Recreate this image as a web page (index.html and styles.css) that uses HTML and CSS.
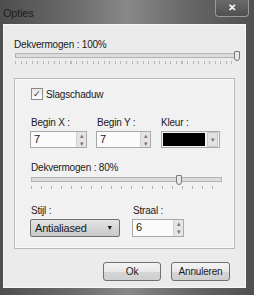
FILE: index.html
```html
<!DOCTYPE html>
<html lang="nl">
<head>
    <meta charset="UTF-8">
    <title>Opties</title>
    <link rel="stylesheet" href="styles.css">
</head>
<body>
<div class="window">
    <!-- Titelbalk -->
    <div class="titlebar">
        <span class="title">Opties</span>
        <div class="close">&#x2715;</div>
    </div>

    <div class="content">
        <div class="label top-label">Dekvermogen : 100%</div>
        <div class="slider wide">
            <div class="track"><div class="thumb" style="left: 218px;"></div></div>
            <div class="ticks"></div>
        </div>

        <!-- Slagschaduw groep -->
        <div class="group">
            <label class="check">
                <span class="box">&#x2713;</span>
                Slagschaduw
            </label>

            <div class="fields">
                <div class="field">
                    <div class="label">Begin X :</div>
                    <div class="spin w57"><span class="val">7</span><span class="arrows"><i>&#x25B4;</i><i>&#x25BE;</i></span></div>
                </div>
                <div class="field">
                    <div class="label">Begin Y :</div>
                    <div class="spin w55"><span class="val">7</span><span class="arrows"><i>&#x25B4;</i><i>&#x25BE;</i></span></div>
                </div>
                <div class="field">
                    <div class="label">Kleur :</div>
                    <div class="colorpick"><span class="swatch"></span><span class="drop">&#x25BE;</span></div>
                </div>
            </div>

            <div class="label mid-label">Dekvermogen : 80%</div>
            <div class="slider narrow">
                <div class="track"><div class="thumb" style="left: 144px;"></div></div>
                <div class="ticks"></div>
            </div>

            <div class="fields bottom-fields">
                <div class="field">
                    <div class="label">Stijl :</div>
                    <div class="select">Antialiased<span class="caret">&#x25BC;</span></div>
                </div>
                <div class="field">
                    <div class="label">Straal :</div>
                    <div class="spin tall w52"><span class="val">6</span><span class="arrows"><i>&#x25B4;</i><i>&#x25BE;</i></span></div>
                </div>
            </div>
        </div>

        <div class="buttons">
            <button class="btn ok">Ok</button>
            <button class="btn">Annuleren</button>
        </div>
    </div>
</div>
</body>
</html>
```

FILE: styles.css
```css
body {
    margin: 0;
    font-family: "Liberation Sans", Arial, sans-serif;
    font-size: 10px;
    letter-spacing: -0.2px;
    color: #1a1a1a;
}
.window {
    width: 254px;
    height: 295px;
    box-sizing: border-box;
    padding: 0 8px 7px 3px;
    display: flex;
    flex-direction: column;
    background: linear-gradient(90deg, #4e4e4e 0%, #6c6c6c 30%, #888 50%, #666 75%, #505050 100%);
}
.titlebar {
    height: 24px;
    display: flex;
    justify-content: space-between;
    align-items: flex-start;
}
.title {
    margin-top: 7px;
    font-size: 11px;
    color: #1e1e1e;
}
.close {
    width: 32px;
    height: 16px;
    margin-right: -3px;
    border: 1px solid #9a9a9a;
    border-top: none;
    border-radius: 0 0 4px 4px;
    background: linear-gradient(#6a6a6a, #505050);
    color: #fff;
    font-size: 10px;
    font-weight: bold;
    text-align: center;
    line-height: 15px;
}
.content {
    flex: 1;
    background: #ebebeb;
    border: 1px solid #f6f6f6;
    padding: 0 10px 0 10px;
    display: flex;
    flex-direction: column;
}
.label {
    height: 13px;
    line-height: 13px;
    white-space: nowrap;
}
.top-label {
    margin-top: 13px;
}
.slider {
    position: relative;
}
.track {
    position: relative;
    height: 3px;
    border: 1px solid #b4b4b4;
    background: #dcdcdc;
}
.thumb {
    position: absolute;
    top: -3px;
    width: 4px;
    height: 8px;
    border: 1px solid #7a7a7a;
    border-radius: 1px 1px 3px 3px;
    background: #e8e8e8;
}
.ticks {
    height: 3px;
    margin-top: 3px;
}
.slider.wide {
    margin-top: 2px;
    margin-left: 1px;
    width: 222px;
}
.slider.wide .ticks {
    background: repeating-linear-gradient(90deg, #b8b8b8 0 1px, transparent 1px 5.55px);
}
.group {
    margin-top: 14px;
    height: 171px;
    box-sizing: border-box;
    border: 1px solid #b8b8b8;
    box-shadow: inset 0 0 0 1px #fafafa;
    background: #f1f1f1;
    padding: 9px 0 0 16px;
    display: flex;
    flex-direction: column;
}
.check {
    display: flex;
    align-items: center;
    gap: 3px;
    height: 12px;
}
.box {
    width: 10px;
    height: 10px;
    border: 1px solid #8a8a8a;
    background: linear-gradient(#e6e6e6, #ffffff);
    font-size: 9px;
    line-height: 10px;
    text-align: center;
    color: #333;
}
.fields {
    display: flex;
    gap: 10px;
    margin-top: 16px;
}
.field {
    display: flex;
    flex-direction: column;
    gap: 2px;
}
.spin {
    height: 17px;
    box-sizing: border-box;
    border: 1px solid #a9a9a9;
    background: #fbfbfb;
    display: flex;
    justify-content: space-between;
    margin-left: -1px;
}
.w57 { width: 57px; }
.w55 { width: 55px; }
.w52 { width: 52px; }
.spin.tall { height: 18px; }
.val {
    padding-left: 3px;
    line-height: 15px;
    font-size: 11px;
}
.arrows {
    width: 9px;
    display: flex;
    flex-direction: column;
    border-left: 1px solid #d0d0d0;
    background: #e4e4e4;
}
.arrows i {
    flex: 1;
    font-style: normal;
    font-size: 7px;
    line-height: 7px;
    text-align: center;
    color: #777;
}
.colorpick {
    width: 59px;
    height: 17px;
    box-sizing: border-box;
    border: 1px solid #a9a9a9;
    background: #f4f4f4;
    display: flex;
    align-items: center;
    padding: 1px;
    gap: 2px;
}
.swatch {
    width: 42px;
    height: 13px;
    background: #000;
}
.drop {
    flex: 1;
    height: 13px;
    border: 1px solid #c8c8c8;
    background: #e2e2e2;
    color: #777;
    font-size: 7px;
    line-height: 13px;
    text-align: center;
}
.mid-label {
    margin-top: 13px;
}
.slider.narrow {
    margin-top: 3px;
    width: 191px;
}
.slider.narrow .ticks {
    margin-top: 4px;
    background: repeating-linear-gradient(90deg, #b0b0b0 0 1px, transparent 1px 10.05px);
}
.bottom-fields {
    margin-top: 15px;
    gap: 13px;
}
.select {
    width: 90px;
    height: 18px;
    box-sizing: border-box;
    border: 1px solid #707070;
    border-radius: 2px;
    background: linear-gradient(#e4e4e4, #c8c8c8);
    padding-left: 4px;
    line-height: 16px;
    font-size: 11px;
    display: flex;
    justify-content: space-between;
    margin-left: -1px;
}
.caret {
    font-size: 7px;
    padding-right: 6px;
}
.buttons {
    display: flex;
    justify-content: flex-end;
    gap: 10px;
    margin-top: 13px;
    padding-right: 5px;
}
.btn {
    height: 19px;
    width: 59px;
    padding: 0;
    border: 1px solid #6f6f6f;
    border-radius: 3px;
    background: linear-gradient(#f4f4f4 0%, #e8e8e8 50%, #d6d6d6 51%, #cfcfcf 100%);
    font-family: "Liberation Sans", Arial, sans-serif;
    font-size: 10px;
    letter-spacing: -0.2px;
    color: #1a1a1a;
}
.btn.ok {
    width: 58px;
}
```
